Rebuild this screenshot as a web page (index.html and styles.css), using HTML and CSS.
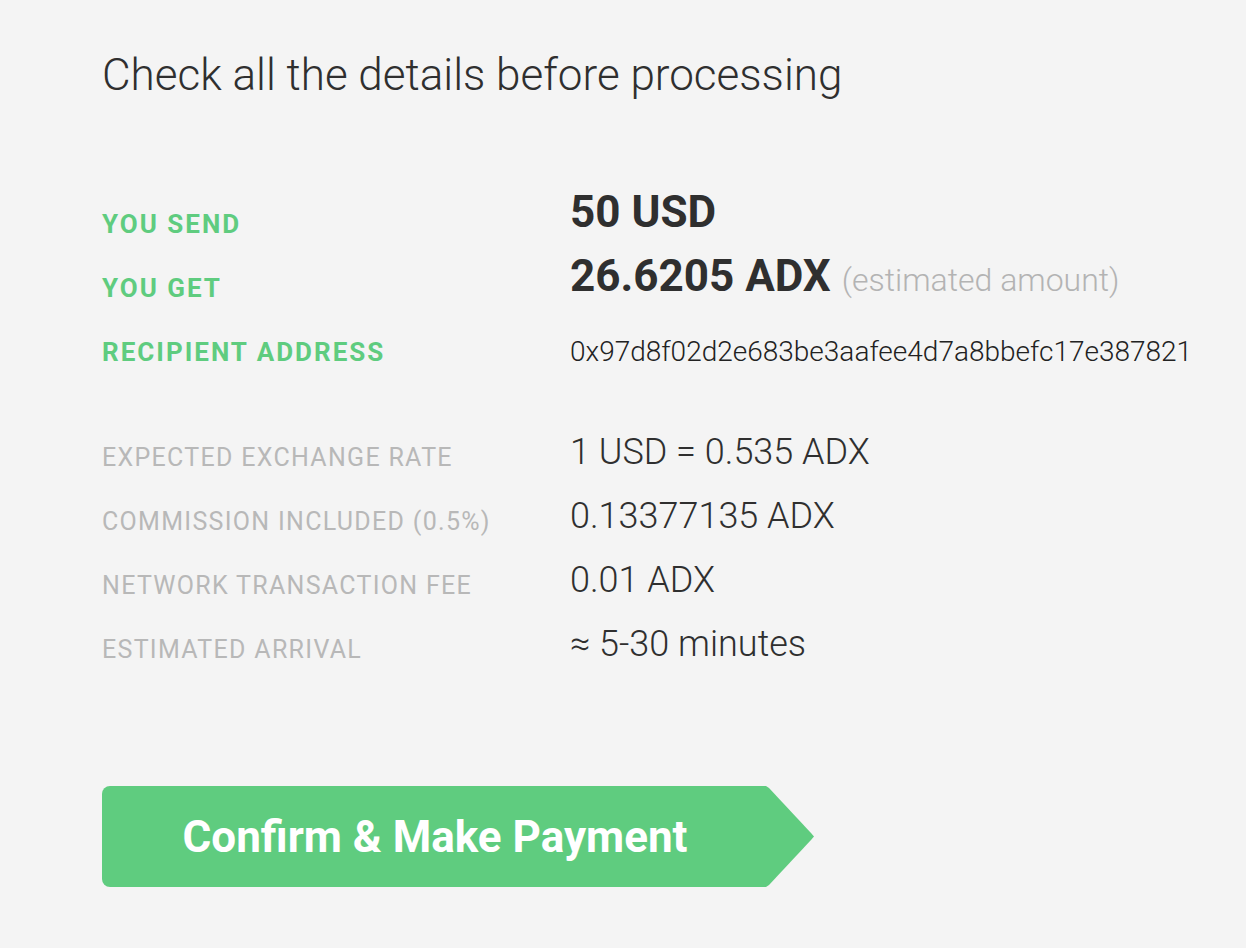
FILE: index.html
```html
<!DOCTYPE html>
<html>
<head>
<meta charset="utf-8">
<link rel="stylesheet" href="styles.css">
</head>
<body>
<main class="page">
  <h1 class="title">Check all the details before processing</h1>
  <section class="details main-details">
    <div class="row">
      <div class="label green">YOU SEND</div>
      <div class="value big">50 USD</div>
    </div>
    <div class="row">
      <div class="label green">YOU GET</div>
      <div class="value big">26.6205 ADX <span class="est">(estimated amount)</span></div>
    </div>
    <div class="row">
      <div class="label green">RECIPIENT ADDRESS</div>
      <div class="value addr">0x97d8f02d2e683be3aafee4d7a8bbefc17e387821</div>
    </div>
  </section>
  <section class="details sub-details">
    <div class="row">
      <div class="label gray">EXPECTED EXCHANGE RATE</div>
      <div class="value mid">1 USD = 0.535 ADX</div>
    </div>
    <div class="row">
      <div class="label gray">COMMISSION INCLUDED (0.5%)</div>
      <div class="value mid">0.13377135 ADX</div>
    </div>
    <div class="row">
      <div class="label gray">NETWORK TRANSACTION FEE</div>
      <div class="value mid">0.01 ADX</div>
    </div>
    <div class="row">
      <div class="label gray">ESTIMATED ARRIVAL</div>
      <div class="value mid">≈ 5-30 minutes</div>
    </div>
  </section>
  <button class="confirm">Confirm &amp; Make Payment</button>
</main>
</body>
</html>
```

FILE: styles.css
```css
html, body {
  margin: 0;
  padding: 0;
  background: #f4f4f4;
}
body {
  font-family: Roboto, "Liberation Sans", sans-serif;
  color: #2f2f2f;
}
.page {
  padding: 47px 0 0 102px;
  display: flex;
  flex-direction: column;
  align-items: flex-start;
}
.title {
  margin: 0;
  font-weight: 300;
  font-size: 44px;
  line-height: 56px;
  color: #2f2f2f;
}
.details {
  display: flex;
  flex-direction: column;
}
.main-details {
  margin-top: 89px;
}
.sub-details {
  margin-top: 42px;
}
.row {
  display: grid;
  grid-template-columns: 468px auto;
  align-items: start;
  height: 64px;
}
.label {
  line-height: 64px;
  white-space: nowrap;
}
.label.green {
  font-size: 26px;
  letter-spacing: 2px;
  color: #5fcc7f;
  font-weight: 700;
}
.label.gray {
  font-size: 25px;
  letter-spacing: 1.3px;
  color: #b8b8b8;
  font-weight: 400;
}
.value {
  white-space: nowrap;
}
.value.big {
  font-weight: 700;
  font-size: 44px;
  line-height: 40px;
  color: #2f2f2f;
}
.est {
  font-weight: 300;
  font-size: 32px;
  color: #b3b3b3;
}
.value.addr {
  font-weight: 300;
  font-size: 28px;
  line-height: 64px;
  color: #222;
}
.value.mid {
  font-weight: 300;
  font-size: 36px;
  line-height: 54px;
  margin-top: -1px;
  color: #2f2f2f;
}
.confirm {
  margin-top: 104px;
  width: 712px;
  height: 101px;
  padding: 0 46px 0 0;
  border: none;
  border-radius: 8px;
  background: #5fcc7f;
  color: #fff;
  font-family: Roboto, "Liberation Sans", sans-serif;
  font-weight: 700;
  font-size: 44px;
  text-align: center;
  clip-path: polygon(0 0, 664px 0, 667px 2px, 709px 47px, 712px 50%, 709px 54px, 667px 99px, 664px 100%, 0 100%);
  cursor: pointer;
}
```
